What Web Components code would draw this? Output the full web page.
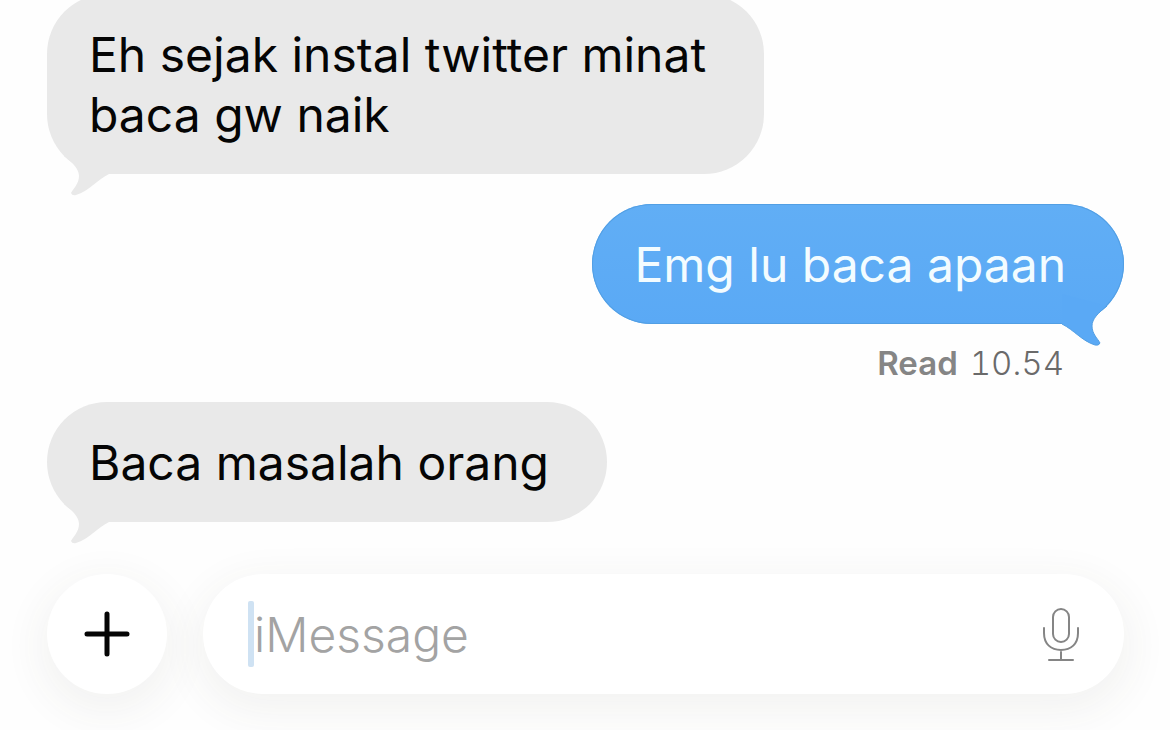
<!DOCTYPE html>
<html lang="id">
<head>
<meta charset="utf-8">
<meta name="viewport" content="width=device-width, initial-scale=1">
<title>Messages</title>
<style>
  html, body { margin: 0; background: #fefefe; }
  body { font-family: Inter, "Liberation Sans", sans-serif; color: #050505; }
</style>
</head>
<body>
<chat-screen>
  <chat-bubble from="them">Eh sejak instal twitter minat<br>baca gw naik</chat-bubble>
  <chat-bubble from="me">Emg lu baca apaan</chat-bubble>
  <read-receipt label="Read">10.54</read-receipt>
  <chat-bubble from="them">Baca masalah orang</chat-bubble>
  <message-composer slot="composer"></message-composer>
</chat-screen>

<script>
  const attach = (el, html) => {
    el.attachShadow({ mode: 'open' }).innerHTML = html;
  };

  customElements.define('chat-screen', class extends HTMLElement {
    constructor() {
      super();
      attach(this, `
        <style>
          :host { display: flex; flex-direction: column; height: 100vh; overflow: hidden; }
          main { flex: 1; min-height: 0; display: flex; flex-direction: column;
                 justify-content: flex-end; padding: 0 46px 52px 47px; }
        </style>
        <main><slot></slot></main>
        <slot name="composer"></slot>`);
    }
  });

  customElements.define('chat-bubble', class extends HTMLElement {
    constructor() {
      super();
      attach(this, `
        <style>
          :host { display: block; position: relative; box-sizing: border-box; flex: none;
                  align-self: flex-start; max-width: 72%; padding: 31px 58px 29px 42px;
                  border-radius: 60px; background: #e9e9e9; --fill: #e9e9e9; --edge: none;
                  font-size: 48px; line-height: 60px; }
          :host([from="me"]) { align-self: flex-end; margin-top: 30px; color: #f3fcff;
                  background: linear-gradient(#61aef5, #5aa9f5); --fill: #5aa9f5; --edge: #529fe4;
                  box-shadow: inset 0 0 0 1px #529fe4; }
          svg { position: absolute; left: 0; bottom: -24px; width: 70px; height: 60px; }
          :host([from="me"]) svg { left: auto; right: 0; transform: scaleX(-1); }
          .fill { fill: var(--fill); }
          .edge { fill: none; stroke: var(--edge); }
        </style>
        <slot></slot>
        <svg viewBox="0 -36 70 60" aria-hidden="true">
          <path class="fill" d="M17 -18C26 -11 32 -5 32 2C32 10 26 15 24 19Q25 22 29 21C42 17 50 6 62 0L62 -30Z"/>
          <path class="edge" d="M17 -18C26 -11 32 -5 32 2C32 10 26 15 24 19Q25 22 29 21C42 17 50 6 62 0"/>
        </svg>`);
    }
  });

  customElements.define('read-receipt', class extends HTMLElement {
    constructor() {
      super();
      attach(this, `
        <style>
          :host { display: flex; align-self: flex-end; gap: 12px; margin: 19px 60px;
                  font-size: 33px; line-height: 40px; font-weight: 300; color: #6a6a6a; flex: none;
                  font-variant-numeric: tabular-nums; }
          b { font-weight: 600; color: #858585; }
        </style>
        <b></b><time><slot></slot></time>`);
      this.shadowRoot.querySelector('b').textContent = this.getAttribute('label') || '';
    }
  });

  customElements.define('message-composer', class extends HTMLElement {
    constructor() {
      super();
      attach(this, `
        <style>
          :host { display: flex; gap: 36px; padding: 0 46px 36px 47px; flex: none; }
          button { border: 0; padding: 0; background: none; display: grid; place-items: center; }
          .add, .field { height: 120px; border-radius: 60px; background: #fff;
                         box-shadow: 0 12px 40px 8px rgba(70, 70, 50, 0.06); }
          .add { width: 120px; flex: none; }
          .field { flex: 1; min-width: 0; display: flex; align-items: center;
                   box-sizing: border-box; padding: 0 44px 0 45px; }
          .caret { width: 6px; height: 66px; border-radius: 2px; background: #cfe2f3; flex: none; }
          input { flex: 1; min-width: 0; border: 0; outline: 0; padding: 2px 0 0; background: none;
                  font: 300 48px/60px Inter, "Liberation Sans", sans-serif; color: #050505; }
          input::placeholder { color: #a3a3a3; opacity: 1; }
        </style>
        <button class="add" type="button" aria-label="Add attachment">
          <svg width="48" height="48" viewBox="0 0 48 48" fill="none" stroke="#050505" stroke-width="5" stroke-linecap="round">
            <path d="M24 4V44M4 24H44"/>
          </svg>
        </button>
        <div class="field">
          <span class="caret"></span>
          <input type="text" placeholder="iMessage" aria-label="iMessage">
          <button type="button" aria-label="Dictate">
            <svg width="38" height="56" viewBox="0 0 38 56" fill="none" stroke="#858585" stroke-width="2" stroke-linecap="round">
              <rect x="11" y="3" width="16" height="33" rx="8"/>
              <path d="M2 22V27C2 38 9 44 19 44S36 38 36 27V22M19 46V53M7 54H31"/>
            </svg>
          </button>
        </div>`);
    }
  });
</script>
</body>
</html>
